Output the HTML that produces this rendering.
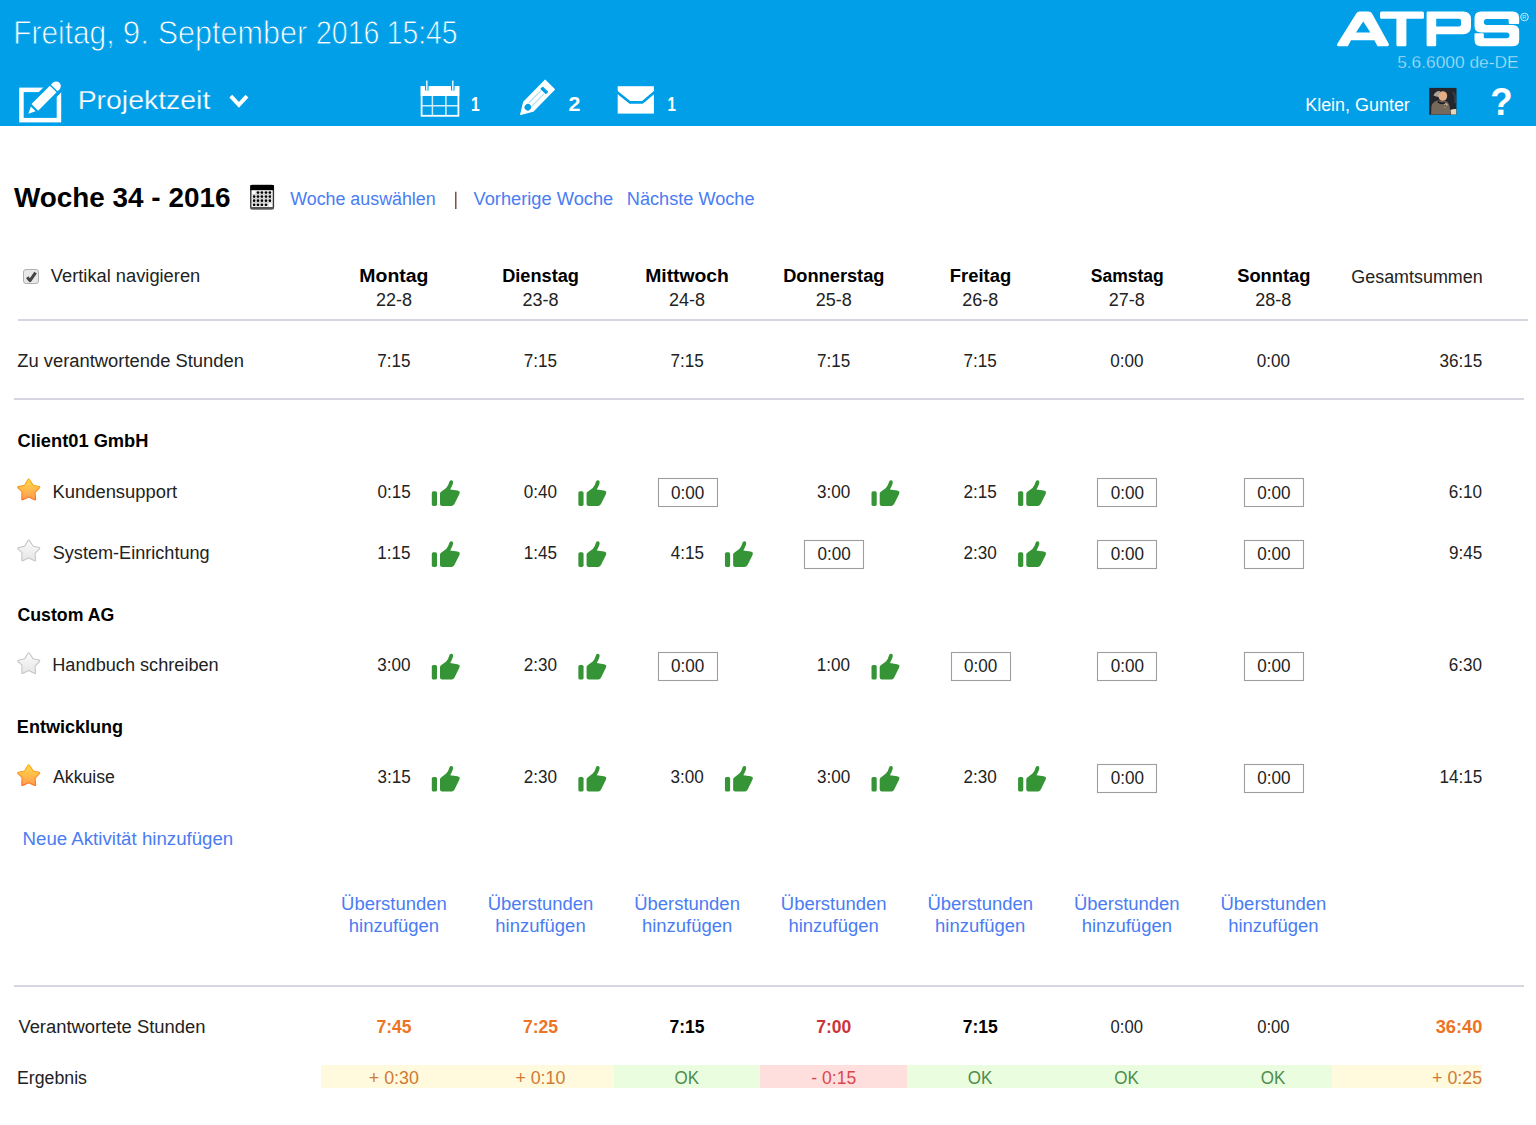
<!DOCTYPE html>
<html><head><meta charset="utf-8"><title>ATPS Projektzeit</title>
<style>
html,body{margin:0;padding:0;background:#fff;}
body{width:1536px;height:1125px;overflow:hidden;position:relative;font-family:"Liberation Sans",sans-serif;}
.hdr{position:absolute;left:0;top:0;width:1536px;height:126px;background:#009fe8;}
.ln{position:absolute;height:2px;background:#d6d6e2;}
.bg{position:absolute;top:1065px;height:23px;}
svg{position:absolute;left:0;top:0;}
svg text{font-family:"Liberation Sans",sans-serif;}
.cb{position:absolute;left:23.4px;top:268.6px;width:13.4px;height:13.4px;border:1.5px solid #b0b0b0;border-radius:3px;background:#e8e8e8;}
</style></head><body>
<div class="hdr"></div>
<div class="ln" style="left:18px;top:319px;width:1510px;"></div>
<div class="ln" style="left:14px;top:398px;width:1510px;"></div>
<div class="ln" style="left:14px;top:985px;width:1510px;"></div>
<div class="bg" style="left:321px;width:293px;background:#fff9de;"></div>
<div class="bg" style="left:614px;width:146px;background:#eafddf;"></div>
<div class="bg" style="left:760px;width:147px;background:#ffdede;"></div>
<div class="bg" style="left:907px;width:425px;background:#eafddf;"></div>
<div class="bg" style="left:1332px;width:150px;background:#fff9de;"></div>
<div class="cb"></div>
<svg width="1536" height="1125" viewBox="0 0 1536 1125">

<defs>
 <symbol id="thumb" viewBox="0 0 28 26" overflow="visible">
  <rect x="0" y="11" width="5.2" height="14.6" rx="1.6" fill="#359435"/>
  <path d="M8.2 13.2 L8.2 23.6 Q8.2 25.6 10.4 25.6 L20 25.6 Q21.6 25.6 22.6 23.8 L27.6 13.6 Q28.8 10.8 25.6 10.3 L18.4 9.2 Q20.3 6 21.1 3.2 Q21.8 0.2 19.6 -0.1 Q17.8 -0.2 17.3 2.2 Q16.6 5.4 14.4 7.6 L9.6 11.2 Q8.2 12.2 8.2 13.2 Z" fill="#359435"/>
 </symbol>
 <linearGradient id="gstar" x1="0" y1="0" x2="0" y2="1">
  <stop offset="0" stop-color="#ffdc48"/><stop offset="1" stop-color="#ff9a50"/>
 </linearGradient>
 <linearGradient id="gstar2" x1="0" y1="0" x2="0" y2="1">
  <stop offset="0" stop-color="#fbfbfb"/><stop offset="1" stop-color="#e6e6e6"/>
 </linearGradient>
 <linearGradient id="gstarS" x1="0" y1="0" x2="0" y2="1">
  <stop offset="0" stop-color="#ffae18"/><stop offset="1" stop-color="#ff6e22"/>
 </linearGradient>
 <symbol id="starf" viewBox="0 0 22 22" overflow="visible">
  <path d="M10.67 0.6 Q11.2 0.6 11.6 1.4 L15.2 6.73 L21.2 8 Q22.2 8.6 21.5 9.4 L17.07 13.93 L17.6 20.6 Q17.6 21.6 16.6 21.3 L10.67 18.47 L4.7 21.3 Q3.8 21.6 3.8 20.6 L4 13.1 L-0.1 9.4 Q-0.6 8.5 0.4 8.1 L6.67 6.73 L9.8 1.4 Q10.2 0.6 10.67 0.6 Z" fill="url(#gstar)" stroke="url(#gstarS)" stroke-width="1.1" stroke-linejoin="round"/>
 </symbol>
 <symbol id="stare" viewBox="0 0 22 22" overflow="visible">
  <path d="M10.67 0.6 Q11.2 0.6 11.6 1.4 L15.2 6.73 L21.2 8 Q22.2 8.6 21.5 9.4 L17.07 13.93 L17.6 20.6 Q17.6 21.6 16.6 21.3 L10.67 18.47 L4.7 21.3 Q3.8 21.6 3.8 20.6 L4 13.1 L-0.1 9.4 Q-0.6 8.5 0.4 8.1 L6.67 6.73 L9.8 1.4 Q10.2 0.6 10.67 0.6 Z" fill="url(#gstar2)" stroke="#c6c6c6" stroke-width="1.1" stroke-linejoin="round"/>
 </symbol>
</defs>


<!-- projektzeit icon -->
<rect x="21.45" y="89.85" width="37.5" height="30.3" fill="none" stroke="#fff" stroke-width="4.5"/>
<g transform="translate(28.4 113.8) rotate(45)">
  <g fill="#009fe8" stroke="#009fe8" stroke-width="6.6" stroke-linejoin="round">
    <path d="M0 0 L-3.2 -6.7 L3.2 -6.7 Z"/>
    <rect x="-4.7" y="-35.1" width="9.4" height="26"/>
    <path d="M-4.7 -36.5 L4.7 -36.5 L4.7 -39.2 A4.7 4.7 0 0 0 -4.7 -39.2 Z"/>
  </g>
  <g fill="#fff">
    <path d="M0 0 L-3.4 -6.9 L3.4 -6.9 Z"/>
    <rect x="-4.7" y="-35.1" width="9.4" height="26"/>
    <path d="M-4.7 -36.5 L4.7 -36.5 L4.7 -39.2 A4.7 4.7 0 0 0 -4.7 -39.2 Z"/>
  </g>
</g>
<path d="M230.8 96.2 L238.9 104.9 L247 96.2" fill="none" stroke="#fff" stroke-width="4"/>
<!-- calendar -->
<g fill="none" stroke="#fff">
 <rect x="421.6" y="87.1" width="36.8" height="28.7" stroke-width="1.8"/>
 <path d="M432.4 96 V115 M445.9 96 V115 M422 105.8 H458" stroke-width="1.5" stroke="#cfeefc"/>
</g>
<rect x="420.7" y="86.2" width="38.6" height="9.8" fill="#fff"/>
<path d="M426.8 80.5 V90.5 M452.8 80.5 V90.5" stroke="#009fe8" stroke-width="3.6"/>
<path d="M426.8 80.5 V90.5 M452.8 80.5 V90.5" stroke="#d9f1fd" stroke-width="1.6"/>
<!-- pencil -->
<g transform="translate(520.6 114.5) rotate(44.5)">
  <path d="M0 0 L-6.6 -11 L-6.6 -41.7 L6.6 -41.7 L6.6 -11 Z" fill="#fff" stroke="#fff" stroke-width="1" stroke-linejoin="round"/>
  <rect x="-3.9" y="-35.6" width="7.8" height="3.6" rx="0.8" fill="#009fe8"/>
  <path d="M-2.2 -14 V-31 M2.2 -14 V-31" stroke="#a8dcf7" stroke-width="1.1"/>
  <ellipse cx="0" cy="-10.3" rx="3.2" ry="3.4" fill="#009fe8"/>
</g>
<!-- envelope -->
<rect x="617.7" y="86.2" width="36.2" height="27.4" fill="#fff"/>
<path d="M616 91.2 L630 102.4 L642.3 102.4 L655.6 91.2" fill="none" stroke="#009fe8" stroke-width="2.6"/>
<!-- ATPS logo -->
<g fill="#fff">
 <path d="M1359.5 11.4 L1368.5 11.4 Q1370.8 11.4 1371.9 13.3 L1388.6 43.5 Q1389.8 46.3 1386.8 46.3 L1377.5 46.3 L1374.3 40.2 L1351 40.2 L1347.8 46.3 L1338.8 46.3 Q1336 46.3 1337.5 43.5 L1356.4 13.3 Q1357.5 11.4 1359.5 11.4 Z M1356 32.4 L1370.4 32.4 L1363.2 21.4 Z" fill-rule="evenodd"/>
 <path d="M1381.5 11.4 L1422.5 11.4 Q1424 11.4 1424 13 L1424 17.2 Q1424 18.8 1422.5 18.8 L1406.4 18.8 L1406.4 45 Q1406.4 46.3 1405 46.3 L1397.8 46.3 Q1396.4 46.3 1396.4 45 L1396.4 18.8 L1381.5 18.8 Q1380 18.8 1380 17.2 L1380 13 Q1380 11.4 1381.5 11.4 Z"/>
 <path d="M1428 11.4 L1463 11.4 Q1471 11.4 1471 19 L1471 26.6 Q1471 34.2 1463 34.2 L1436.2 34.2 L1436.2 45 Q1436.2 46.3 1434.8 46.3 L1428 46.3 Q1426.6 46.3 1426.6 45 L1426.6 12.8 Q1426.6 11.4 1428 11.4 Z M1436.2 18.8 L1436.2 26.4 L1459 26.4 Q1461 26.4 1461 24.4 L1461 20.8 Q1461 18.8 1459 18.8 Z" fill-rule="evenodd"/>
 <path d="M1481 11.4 H1512.7 Q1519.2 11.4 1519.2 17.9 V23 Q1519.2 23.9 1518.3 23.9 H1509.6 Q1508.7 23.9 1508.7 23 V20.2 Q1508.7 19 1507.5 19 H1486.8 Q1483.8 19 1483.8 22 Q1483.8 25 1486.8 25 H1512.7 Q1519.2 25 1519.2 31.5 V39.8 Q1519.2 46.3 1512.7 46.3 H1481 Q1474.5 46.3 1474.5 39.8 V34.1 Q1474.5 33.2 1475.4 33.2 H1482.9 Q1483.8 33.2 1483.8 34.1 V37 Q1483.8 38.2 1485 38.2 H1506.5 Q1509.5 38.2 1509.5 35.3 Q1509.5 32.4 1506.5 32.4 H1481 Q1474.5 32.4 1474.5 25.9 V17.9 Q1474.5 11.4 1481 11.4 Z"/>
</g>
<circle cx="1524.5" cy="17" r="3.8" fill="none" stroke="#cdeefc" stroke-width="1"/>
<text x="1522.3" y="19" font-size="5.5" fill="#cdeefc" font-family="Liberation Sans">R</text>
<!-- avatar -->
<clipPath id="avclip"><rect x="1429.2" y="87.9" width="27.3" height="26.9"/></clipPath>
<filter id="avblur" x="-10%" y="-10%" width="120%" height="120%"><feGaussianBlur stdDeviation="0.55"/></filter>
<rect x="1429.2" y="87.9" width="27.3" height="26.9" fill="#23262d"/>
<g clip-path="url(#avclip)"><g filter="url(#avblur)">
 <path d="M1453 92 Q1456 96 1455 103" stroke="#3a3e46" stroke-width="2" fill="none"/>
 <path d="M1431 114.8 L1431.5 106 Q1433 101 1438 100.5 L1446 101 Q1449.5 103 1450 109 L1450.5 114.8 Z" fill="#76685a"/>
 <path d="M1438 101 Q1442 103.5 1445 101.5 L1446 103 Q1442 105.5 1437.5 102.5 Z" fill="#1c1c20"/>
 <path d="M1444.5 102 L1448 104.5 L1446.5 106 Z" fill="#b9b4aa"/>
 <path d="M1433.5 95.5 Q1435.5 90.5 1440 91 L1439 97 Q1436 96.5 1433.5 95.5 Z" fill="#a9a59c"/>
 <ellipse cx="1442.8" cy="96" rx="4.4" ry="4.8" fill="#e2ac84"/>
 <circle cx="1444.5" cy="104.5" r="0.6" fill="#c8b060"/>
 <circle cx="1445" cy="107.5" r="0.6" fill="#c8b060"/>
 <path d="M1450.5 110 Q1453 108.5 1456.5 109 L1456.5 114.8 L1451 114.8 Z" fill="#e6d6bc"/>
</g></g>

<!-- week calendar icon -->
<g>
 <rect x="250.8" y="185.4" width="22.6" height="23.4" rx="1.5" fill="#fff" stroke="#333" stroke-width="1.4"/>
 <rect x="250.4" y="185" width="23.4" height="5.2" fill="#000"/>
 <rect x="250.6" y="207" width="23" height="2.2" fill="#555"/>
 <path d="M256.1 190.5 V207" stroke="#c8c8c8" stroke-width="1"/>
<path d="M260.0 190.5 V207" stroke="#c8c8c8" stroke-width="1"/>
<path d="M264.0 190.5 V207" stroke="#c8c8c8" stroke-width="1"/>
<path d="M268.0 190.5 V207" stroke="#c8c8c8" stroke-width="1"/>
<path d="M252 194.6 H272.5" stroke="#c8c8c8" stroke-width="1"/>
<path d="M252 198.6 H272.5" stroke="#c8c8c8" stroke-width="1"/>
<path d="M252 202.7 H272.5" stroke="#c8c8c8" stroke-width="1"/>
<circle cx="258.0" cy="192.6" r="1.35" fill="#000"/>
<circle cx="261.9" cy="192.6" r="1.35" fill="#000"/>
<circle cx="266.0" cy="192.6" r="1.35" fill="#000"/>
<circle cx="269.9" cy="192.6" r="1.35" fill="#000"/>
<circle cx="254.1" cy="196.6" r="1.35" fill="#000"/>
<circle cx="258.0" cy="196.6" r="1.35" fill="#000"/>
<circle cx="261.9" cy="196.6" r="1.35" fill="#000"/>
<circle cx="266.0" cy="196.6" r="1.35" fill="#000"/>
<circle cx="269.9" cy="196.6" r="1.35" fill="#000"/>
<circle cx="254.1" cy="200.7" r="1.35" fill="#000"/>
<circle cx="258.0" cy="200.7" r="1.35" fill="#000"/>
<circle cx="261.9" cy="200.7" r="1.35" fill="#000"/>
<circle cx="266.0" cy="200.7" r="1.35" fill="#000"/>
<circle cx="269.9" cy="200.7" r="1.35" fill="#000"/>
<circle cx="254.1" cy="204.8" r="1.35" fill="#000"/>
<circle cx="258.0" cy="204.8" r="1.35" fill="#000"/>
<circle cx="261.9" cy="204.8" r="1.35" fill="#000"/>
<circle cx="266.0" cy="204.8" r="1.35" fill="#000"/>
</g>
<path d="M455.8 191.7 V209" stroke="#6e3030" stroke-width="1.3"/>
<path d="M27.2 277.2 L30 280.6 L35.6 272.6" fill="none" stroke="#444" stroke-width="3" stroke-linejoin="round"/>
<use href="#thumb" x="431.80" y="480.30" width="28" height="26"/>
<use href="#thumb" x="578.37" y="480.30" width="28" height="26"/>
<use href="#thumb" x="871.51" y="480.30" width="28" height="26"/>
<use href="#thumb" x="1018.08" y="480.30" width="28" height="26"/>
<use href="#thumb" x="431.80" y="541.30" width="28" height="26"/>
<use href="#thumb" x="578.37" y="541.30" width="28" height="26"/>
<use href="#thumb" x="724.94" y="541.30" width="28" height="26"/>
<use href="#thumb" x="1018.08" y="541.30" width="28" height="26"/>
<use href="#thumb" x="431.80" y="653.90" width="28" height="26"/>
<use href="#thumb" x="578.37" y="653.90" width="28" height="26"/>
<use href="#thumb" x="871.51" y="653.90" width="28" height="26"/>
<use href="#thumb" x="431.80" y="766.00" width="28" height="26"/>
<use href="#thumb" x="578.37" y="766.00" width="28" height="26"/>
<use href="#thumb" x="724.94" y="766.00" width="28" height="26"/>
<use href="#thumb" x="871.51" y="766.00" width="28" height="26"/>
<use href="#thumb" x="1018.08" y="766.00" width="28" height="26"/>
<use href="#starf" x="18.00" y="478.50" width="22" height="22"/>
<use href="#stare" x="18.00" y="539.50" width="22" height="22"/>
<use href="#stare" x="18.00" y="652.10" width="22" height="22"/>
<use href="#starf" x="18.00" y="764.20" width="22" height="22"/>
<rect x="658.5" y="478.5" width="59" height="28" fill="#fff" stroke="#9e9e9e" stroke-width="1.1"/>
<rect x="1097.5" y="478.5" width="59" height="28" fill="#fff" stroke="#9e9e9e" stroke-width="1.1"/>
<rect x="1244.5" y="478.5" width="59" height="28" fill="#fff" stroke="#9e9e9e" stroke-width="1.1"/>
<rect x="804.5" y="540.5" width="59" height="28" fill="#fff" stroke="#9e9e9e" stroke-width="1.1"/>
<rect x="1097.5" y="540.5" width="59" height="28" fill="#fff" stroke="#9e9e9e" stroke-width="1.1"/>
<rect x="1244.5" y="540.5" width="59" height="28" fill="#fff" stroke="#9e9e9e" stroke-width="1.1"/>
<rect x="658.5" y="652.5" width="59" height="28" fill="#fff" stroke="#9e9e9e" stroke-width="1.1"/>
<rect x="951.5" y="652.5" width="59" height="28" fill="#fff" stroke="#9e9e9e" stroke-width="1.1"/>
<rect x="1097.5" y="652.5" width="59" height="28" fill="#fff" stroke="#9e9e9e" stroke-width="1.1"/>
<rect x="1244.5" y="652.5" width="59" height="28" fill="#fff" stroke="#9e9e9e" stroke-width="1.1"/>
<rect x="1097.5" y="764.5" width="59" height="28" fill="#fff" stroke="#9e9e9e" stroke-width="1.1"/>
<rect x="1244.5" y="764.5" width="59" height="28" fill="#fff" stroke="#9e9e9e" stroke-width="1.1"/>
<text x="13.27" y="44.30" font-size="34.00" font-weight="400" fill="#ffffff" textLength="101.16" lengthAdjust="spacingAndGlyphs" stroke="#009fe8" stroke-width="0.9">Freitag,</text>
<text x="122.83" y="44.30" font-size="34.00" font-weight="400" fill="#ffffff" textLength="26.09" lengthAdjust="spacingAndGlyphs" stroke="#009fe8" stroke-width="0.9">9.</text>
<text x="157.75" y="44.30" font-size="34.00" font-weight="400" fill="#ffffff" textLength="149.40" lengthAdjust="spacingAndGlyphs" stroke="#009fe8" stroke-width="0.9">September</text>
<text x="315.96" y="44.30" font-size="34.00" font-weight="400" fill="#ffffff" textLength="63.49" lengthAdjust="spacingAndGlyphs" stroke="#009fe8" stroke-width="0.9">2016</text>
<text x="386.63" y="44.30" font-size="34.00" font-weight="400" fill="#ffffff" textLength="70.92" lengthAdjust="spacingAndGlyphs" stroke="#009fe8" stroke-width="0.9">15:45</text>
<text x="77.68" y="109.10" font-size="26.00" font-weight="400" fill="#ffffff" textLength="132.62" lengthAdjust="spacingAndGlyphs" stroke="#009fe8" stroke-width="0.25">Projektzeit</text>
<text x="471.03" y="111.00" font-size="21.00" font-weight="700" fill="#ffffff" textLength="8.66" lengthAdjust="spacingAndGlyphs" >1</text>
<text x="568.43" y="111.00" font-size="21.00" font-weight="700" fill="#ffffff" textLength="11.90" lengthAdjust="spacingAndGlyphs" >2</text>
<text x="667.55" y="111.00" font-size="21.00" font-weight="700" fill="#ffffff" textLength="8.42" lengthAdjust="spacingAndGlyphs" >1</text>
<text x="1397.16" y="68.40" font-size="17.00" font-weight="400" fill="#b2e0f7" textLength="121.37" lengthAdjust="spacingAndGlyphs" stroke="#009fe8" stroke-width="0.3">5.6.6000 de-DE</text>
<text x="1305.20" y="110.90" font-size="18.00" font-weight="400" fill="#ffffff" textLength="104.64" lengthAdjust="spacingAndGlyphs" >Klein, Gunter</text>
<text x="1490.15" y="114.70" font-size="38.00" font-weight="700" fill="#ffffff" textLength="22.42" lengthAdjust="spacingAndGlyphs" >?</text>
<text x="14.00" y="207.20" font-size="28.00" font-weight="700" fill="#000000" textLength="216.39" lengthAdjust="spacingAndGlyphs" >Woche 34 - 2016</text>
<text x="290.20" y="205.00" font-size="18.00" font-weight="400" fill="#4a7cf2" textLength="145.50" lengthAdjust="spacingAndGlyphs" >Woche auswählen</text>
<text x="473.50" y="205.00" font-size="18.00" font-weight="400" fill="#4a7cf2" textLength="139.74" lengthAdjust="spacingAndGlyphs" >Vorherige Woche</text>
<text x="626.88" y="205.00" font-size="18.00" font-weight="400" fill="#4a7cf2" textLength="127.60" lengthAdjust="spacingAndGlyphs" >Nächste Woche</text>
<text x="50.80" y="282.30" font-size="18.00" font-weight="400" fill="#222222" textLength="149.43" lengthAdjust="spacingAndGlyphs" >Vertikal navigieren</text>
<text x="359.39" y="282.10" font-size="18.00" font-weight="700" fill="#000000" textLength="69.06" lengthAdjust="spacingAndGlyphs" >Montag</text>
<text x="375.93" y="305.50" font-size="18.00" font-weight="400" fill="#222222" textLength="36.03" lengthAdjust="spacingAndGlyphs" >22-8</text>
<text x="502.16" y="282.10" font-size="18.00" font-weight="700" fill="#000000" textLength="76.80" lengthAdjust="spacingAndGlyphs" >Dienstag</text>
<text x="522.50" y="305.50" font-size="18.00" font-weight="400" fill="#222222" textLength="36.03" lengthAdjust="spacingAndGlyphs" >23-8</text>
<text x="645.19" y="282.10" font-size="18.00" font-weight="700" fill="#000000" textLength="83.74" lengthAdjust="spacingAndGlyphs" >Mittwoch</text>
<text x="669.07" y="305.50" font-size="18.00" font-weight="400" fill="#222222" textLength="36.03" lengthAdjust="spacingAndGlyphs" >24-8</text>
<text x="783.16" y="282.10" font-size="18.00" font-weight="700" fill="#000000" textLength="101.31" lengthAdjust="spacingAndGlyphs" >Donnerstag</text>
<text x="815.64" y="305.50" font-size="18.00" font-weight="400" fill="#222222" textLength="36.03" lengthAdjust="spacingAndGlyphs" >25-8</text>
<text x="949.85" y="282.10" font-size="18.00" font-weight="700" fill="#000000" textLength="61.33" lengthAdjust="spacingAndGlyphs" >Freitag</text>
<text x="962.21" y="305.50" font-size="18.00" font-weight="400" fill="#222222" textLength="36.03" lengthAdjust="spacingAndGlyphs" >26-8</text>
<text x="1090.73" y="282.10" font-size="18.00" font-weight="700" fill="#000000" textLength="73.10" lengthAdjust="spacingAndGlyphs" >Samstag</text>
<text x="1108.78" y="305.50" font-size="18.00" font-weight="400" fill="#222222" textLength="36.03" lengthAdjust="spacingAndGlyphs" >27-8</text>
<text x="1237.21" y="282.10" font-size="18.00" font-weight="700" fill="#000000" textLength="73.26" lengthAdjust="spacingAndGlyphs" >Sonntag</text>
<text x="1255.35" y="305.50" font-size="18.00" font-weight="400" fill="#222222" textLength="36.03" lengthAdjust="spacingAndGlyphs" >28-8</text>
<text x="1351.36" y="282.80" font-size="18.00" font-weight="400" fill="#222222" textLength="131.24" lengthAdjust="spacingAndGlyphs" >Gesamtsummen</text>
<text x="17.23" y="367.10" font-size="18.00" font-weight="400" fill="#222222" textLength="226.71" lengthAdjust="spacingAndGlyphs" >Zu verantwortende Stunden</text>
<text x="377.30" y="367.10" font-size="18.00" font-weight="400" fill="#222222" textLength="33.28" lengthAdjust="spacingAndGlyphs" >7:15</text>
<text x="523.87" y="367.10" font-size="18.00" font-weight="400" fill="#222222" textLength="33.28" lengthAdjust="spacingAndGlyphs" >7:15</text>
<text x="670.44" y="367.10" font-size="18.00" font-weight="400" fill="#222222" textLength="33.28" lengthAdjust="spacingAndGlyphs" >7:15</text>
<text x="817.01" y="367.10" font-size="18.00" font-weight="400" fill="#222222" textLength="33.28" lengthAdjust="spacingAndGlyphs" >7:15</text>
<text x="963.58" y="367.10" font-size="18.00" font-weight="400" fill="#222222" textLength="33.28" lengthAdjust="spacingAndGlyphs" >7:15</text>
<text x="1110.15" y="367.10" font-size="18.00" font-weight="400" fill="#222222" textLength="33.28" lengthAdjust="spacingAndGlyphs" >0:00</text>
<text x="1256.72" y="367.10" font-size="18.00" font-weight="400" fill="#222222" textLength="33.28" lengthAdjust="spacingAndGlyphs" >0:00</text>
<text x="1439.40" y="367.10" font-size="18.00" font-weight="400" fill="#222222" textLength="42.79" lengthAdjust="spacingAndGlyphs" >36:15</text>
<text x="17.43" y="446.60" font-size="18.00" font-weight="700" fill="#000000" textLength="131.08" lengthAdjust="spacingAndGlyphs" >Client01 GmbH</text>
<text x="17.45" y="621.00" font-size="18.00" font-weight="700" fill="#000000" textLength="96.79" lengthAdjust="spacingAndGlyphs" >Custom AG</text>
<text x="16.87" y="733.00" font-size="18.00" font-weight="700" fill="#000000" textLength="106.28" lengthAdjust="spacingAndGlyphs" >Entwicklung</text>
<text x="52.46" y="497.50" font-size="18.00" font-weight="400" fill="#222222" textLength="124.77" lengthAdjust="spacingAndGlyphs" >Kundensupport</text>
<text x="377.44" y="497.50" font-size="18.00" font-weight="400" fill="#222222" textLength="33.28" lengthAdjust="spacingAndGlyphs" >0:15</text>
<text x="523.87" y="497.50" font-size="18.00" font-weight="400" fill="#222222" textLength="33.28" lengthAdjust="spacingAndGlyphs" >0:40</text>
<text x="670.94" y="498.50" font-size="18.00" font-weight="400" fill="#222222" textLength="33.28" lengthAdjust="spacingAndGlyphs" >0:00</text>
<text x="817.01" y="497.50" font-size="18.00" font-weight="400" fill="#222222" textLength="33.28" lengthAdjust="spacingAndGlyphs" >3:00</text>
<text x="963.58" y="497.50" font-size="18.00" font-weight="400" fill="#222222" textLength="33.28" lengthAdjust="spacingAndGlyphs" >2:15</text>
<text x="1110.65" y="498.50" font-size="18.00" font-weight="400" fill="#222222" textLength="33.28" lengthAdjust="spacingAndGlyphs" >0:00</text>
<text x="1257.22" y="498.50" font-size="18.00" font-weight="400" fill="#222222" textLength="33.28" lengthAdjust="spacingAndGlyphs" >0:00</text>
<text x="1448.64" y="497.50" font-size="18.00" font-weight="400" fill="#222222" textLength="33.28" lengthAdjust="spacingAndGlyphs" >6:10</text>
<text x="52.73" y="558.50" font-size="18.00" font-weight="400" fill="#222222" textLength="156.88" lengthAdjust="spacingAndGlyphs" >System-Einrichtung</text>
<text x="377.17" y="558.50" font-size="18.00" font-weight="400" fill="#222222" textLength="33.28" lengthAdjust="spacingAndGlyphs" >1:15</text>
<text x="523.74" y="558.50" font-size="18.00" font-weight="400" fill="#222222" textLength="33.28" lengthAdjust="spacingAndGlyphs" >1:45</text>
<text x="670.71" y="558.50" font-size="18.00" font-weight="400" fill="#222222" textLength="33.28" lengthAdjust="spacingAndGlyphs" >4:15</text>
<text x="817.51" y="559.50" font-size="18.00" font-weight="400" fill="#222222" textLength="33.28" lengthAdjust="spacingAndGlyphs" >0:00</text>
<text x="963.45" y="558.50" font-size="18.00" font-weight="400" fill="#222222" textLength="33.28" lengthAdjust="spacingAndGlyphs" >2:30</text>
<text x="1110.65" y="559.50" font-size="18.00" font-weight="400" fill="#222222" textLength="33.28" lengthAdjust="spacingAndGlyphs" >0:00</text>
<text x="1257.22" y="559.50" font-size="18.00" font-weight="400" fill="#222222" textLength="33.28" lengthAdjust="spacingAndGlyphs" >0:00</text>
<text x="1448.91" y="558.50" font-size="18.00" font-weight="400" fill="#222222" textLength="33.28" lengthAdjust="spacingAndGlyphs" >9:45</text>
<text x="52.28" y="671.10" font-size="18.00" font-weight="400" fill="#222222" textLength="166.44" lengthAdjust="spacingAndGlyphs" >Handbuch schreiben</text>
<text x="377.30" y="671.10" font-size="18.00" font-weight="400" fill="#222222" textLength="33.28" lengthAdjust="spacingAndGlyphs" >3:00</text>
<text x="523.74" y="671.10" font-size="18.00" font-weight="400" fill="#222222" textLength="33.28" lengthAdjust="spacingAndGlyphs" >2:30</text>
<text x="670.94" y="672.10" font-size="18.00" font-weight="400" fill="#222222" textLength="33.28" lengthAdjust="spacingAndGlyphs" >0:00</text>
<text x="816.75" y="671.10" font-size="18.00" font-weight="400" fill="#222222" textLength="33.28" lengthAdjust="spacingAndGlyphs" >1:00</text>
<text x="964.08" y="672.10" font-size="18.00" font-weight="400" fill="#222222" textLength="33.28" lengthAdjust="spacingAndGlyphs" >0:00</text>
<text x="1110.65" y="672.10" font-size="18.00" font-weight="400" fill="#222222" textLength="33.28" lengthAdjust="spacingAndGlyphs" >0:00</text>
<text x="1257.22" y="672.10" font-size="18.00" font-weight="400" fill="#222222" textLength="33.28" lengthAdjust="spacingAndGlyphs" >0:00</text>
<text x="1448.64" y="671.10" font-size="18.00" font-weight="400" fill="#222222" textLength="33.28" lengthAdjust="spacingAndGlyphs" >6:30</text>
<text x="53.00" y="783.20" font-size="18.00" font-weight="400" fill="#222222" textLength="61.92" lengthAdjust="spacingAndGlyphs" >Akkuise</text>
<text x="377.44" y="783.20" font-size="18.00" font-weight="400" fill="#222222" textLength="33.28" lengthAdjust="spacingAndGlyphs" >3:15</text>
<text x="523.74" y="783.20" font-size="18.00" font-weight="400" fill="#222222" textLength="33.28" lengthAdjust="spacingAndGlyphs" >2:30</text>
<text x="670.44" y="783.20" font-size="18.00" font-weight="400" fill="#222222" textLength="33.28" lengthAdjust="spacingAndGlyphs" >3:00</text>
<text x="817.01" y="783.20" font-size="18.00" font-weight="400" fill="#222222" textLength="33.28" lengthAdjust="spacingAndGlyphs" >3:00</text>
<text x="963.45" y="783.20" font-size="18.00" font-weight="400" fill="#222222" textLength="33.28" lengthAdjust="spacingAndGlyphs" >2:30</text>
<text x="1110.65" y="784.20" font-size="18.00" font-weight="400" fill="#222222" textLength="33.28" lengthAdjust="spacingAndGlyphs" >0:00</text>
<text x="1257.22" y="784.20" font-size="18.00" font-weight="400" fill="#222222" textLength="33.28" lengthAdjust="spacingAndGlyphs" >0:00</text>
<text x="1439.40" y="783.20" font-size="18.00" font-weight="400" fill="#222222" textLength="42.79" lengthAdjust="spacingAndGlyphs" >14:15</text>
<text x="22.55" y="845.30" font-size="18.00" font-weight="400" fill="#4a7cf2" textLength="210.69" lengthAdjust="spacingAndGlyphs" >Neue Aktivität hinzufügen</text>
<text x="341.12" y="909.70" font-size="18.00" font-weight="400" fill="#4a7cf2" textLength="105.65" lengthAdjust="spacingAndGlyphs" >Überstunden</text>
<text x="348.80" y="932.20" font-size="18.00" font-weight="400" fill="#4a7cf2" textLength="90.28" lengthAdjust="spacingAndGlyphs" >hinzufügen</text>
<text x="487.69" y="909.70" font-size="18.00" font-weight="400" fill="#4a7cf2" textLength="105.65" lengthAdjust="spacingAndGlyphs" >Überstunden</text>
<text x="495.37" y="932.20" font-size="18.00" font-weight="400" fill="#4a7cf2" textLength="90.28" lengthAdjust="spacingAndGlyphs" >hinzufügen</text>
<text x="634.26" y="909.70" font-size="18.00" font-weight="400" fill="#4a7cf2" textLength="105.65" lengthAdjust="spacingAndGlyphs" >Überstunden</text>
<text x="641.94" y="932.20" font-size="18.00" font-weight="400" fill="#4a7cf2" textLength="90.28" lengthAdjust="spacingAndGlyphs" >hinzufügen</text>
<text x="780.83" y="909.70" font-size="18.00" font-weight="400" fill="#4a7cf2" textLength="105.65" lengthAdjust="spacingAndGlyphs" >Überstunden</text>
<text x="788.51" y="932.20" font-size="18.00" font-weight="400" fill="#4a7cf2" textLength="90.28" lengthAdjust="spacingAndGlyphs" >hinzufügen</text>
<text x="927.40" y="909.70" font-size="18.00" font-weight="400" fill="#4a7cf2" textLength="105.65" lengthAdjust="spacingAndGlyphs" >Überstunden</text>
<text x="935.08" y="932.20" font-size="18.00" font-weight="400" fill="#4a7cf2" textLength="90.28" lengthAdjust="spacingAndGlyphs" >hinzufügen</text>
<text x="1073.97" y="909.70" font-size="18.00" font-weight="400" fill="#4a7cf2" textLength="105.65" lengthAdjust="spacingAndGlyphs" >Überstunden</text>
<text x="1081.65" y="932.20" font-size="18.00" font-weight="400" fill="#4a7cf2" textLength="90.28" lengthAdjust="spacingAndGlyphs" >hinzufügen</text>
<text x="1220.54" y="909.70" font-size="18.00" font-weight="400" fill="#4a7cf2" textLength="105.65" lengthAdjust="spacingAndGlyphs" >Überstunden</text>
<text x="1228.22" y="932.20" font-size="18.00" font-weight="400" fill="#4a7cf2" textLength="90.28" lengthAdjust="spacingAndGlyphs" >hinzufügen</text>
<text x="18.40" y="1033.30" font-size="18.00" font-weight="400" fill="#222222" textLength="187.03" lengthAdjust="spacingAndGlyphs" >Verantwortete Stunden</text>
<text x="376.43" y="1033.20" font-size="17.50" font-weight="700" fill="#ec7424" textLength="35.03" lengthAdjust="spacingAndGlyphs" >7:45</text>
<text x="523.00" y="1033.20" font-size="17.50" font-weight="700" fill="#ec7424" textLength="35.03" lengthAdjust="spacingAndGlyphs" >7:25</text>
<text x="669.57" y="1033.20" font-size="17.50" font-weight="700" fill="#000000" textLength="35.03" lengthAdjust="spacingAndGlyphs" >7:15</text>
<text x="816.28" y="1033.20" font-size="17.50" font-weight="700" fill="#c9353a" textLength="35.03" lengthAdjust="spacingAndGlyphs" >7:00</text>
<text x="962.71" y="1033.20" font-size="17.50" font-weight="700" fill="#000000" textLength="35.03" lengthAdjust="spacingAndGlyphs" >7:15</text>
<text x="1110.62" y="1033.20" font-size="17.50" font-weight="400" fill="#222222" textLength="32.36" lengthAdjust="spacingAndGlyphs" >0:00</text>
<text x="1257.19" y="1033.20" font-size="17.50" font-weight="400" fill="#222222" textLength="32.36" lengthAdjust="spacingAndGlyphs" >0:00</text>
<text x="1435.72" y="1033.20" font-size="18.00" font-weight="700" fill="#ec7424" textLength="46.62" lengthAdjust="spacingAndGlyphs" >36:40</text>
<text x="17.02" y="1083.80" font-size="18.00" font-weight="400" fill="#222222" textLength="69.94" lengthAdjust="spacingAndGlyphs" >Ergebnis</text>
<text x="368.83" y="1084.00" font-size="18.00" font-weight="400" fill="#cf7a36" textLength="49.94" lengthAdjust="spacingAndGlyphs" >+ 0:30</text>
<text x="515.40" y="1084.00" font-size="18.00" font-weight="400" fill="#cf7a36" textLength="49.94" lengthAdjust="spacingAndGlyphs" >+ 0:10</text>
<text x="674.54" y="1084.00" font-size="18.00" font-weight="400" fill="#4d8c4d" textLength="24.58" lengthAdjust="spacingAndGlyphs" >OK</text>
<text x="811.35" y="1084.00" font-size="18.00" font-weight="400" fill="#d9494b" textLength="44.88" lengthAdjust="spacingAndGlyphs" >- 0:15</text>
<text x="967.68" y="1084.00" font-size="18.00" font-weight="400" fill="#4d8c4d" textLength="24.58" lengthAdjust="spacingAndGlyphs" >OK</text>
<text x="1114.25" y="1084.00" font-size="18.00" font-weight="400" fill="#4d8c4d" textLength="24.58" lengthAdjust="spacingAndGlyphs" >OK</text>
<text x="1260.82" y="1084.00" font-size="18.00" font-weight="400" fill="#4d8c4d" textLength="24.58" lengthAdjust="spacingAndGlyphs" >OK</text>
<text x="1432.08" y="1084.00" font-size="18.00" font-weight="400" fill="#cf7a36" textLength="49.94" lengthAdjust="spacingAndGlyphs" >+ 0:25</text>
</svg>
</body></html>
